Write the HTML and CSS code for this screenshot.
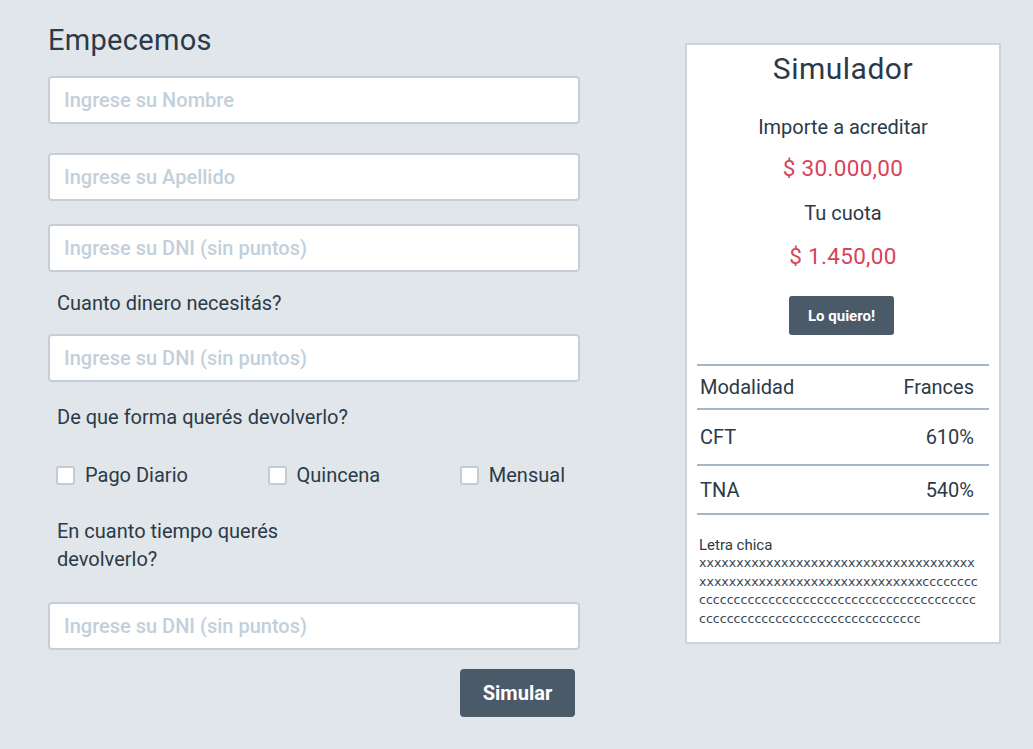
FILE: index.html
```html
<!DOCTYPE html>
<html lang="es">
<head>
<meta charset="utf-8">
<title>Empecemos</title>
<link rel="stylesheet" href="styles.css">
</head>
<body>
<div class="page">
  <form class="form">
    <h1 class="title">Empecemos</h1>
    <input class="field f1" type="text" placeholder="Ingrese su Nombre">
    <input class="field f2" type="text" placeholder="Ingrese su Apellido">
    <input class="field f3" type="text" placeholder="Ingrese su DNI (sin puntos)">
    <p class="label l1">Cuanto dinero necesitás?</p>
    <input class="field f4" type="text" placeholder="Ingrese su DNI (sin puntos)">
    <p class="label l2">De que forma querés devolverlo?</p>
    <div class="checks">
      <label class="check"><input type="checkbox"><span>Pago Diario</span></label>
      <label class="check"><input type="checkbox"><span>Quincena</span></label>
      <label class="check"><input type="checkbox"><span>Mensual</span></label>
    </div>
    <p class="label l3">En cuanto tiempo querés devolverlo?</p>
    <input class="field f5" type="text" placeholder="Ingrese su DNI (sin puntos)">
    <button class="btn-simular" type="button">Simular</button>
  </form>

  <aside class="card">
    <h2 class="card-title">Simulador</h2>
    <p class="card-label c1">Importe a acreditar</p>
    <p class="amount a1">$ 30.000,00</p>
    <p class="card-label c2">Tu cuota</p>
    <p class="amount a2">$ 1.450,00</p>
    <button class="btn-quiero" type="button">Lo quiero!</button>
    <div class="table">
      <div class="row r1"><span>Modalidad</span><span>Frances</span></div>
      <div class="row r2"><span>CFT</span><span>610%</span></div>
      <div class="row r3"><span>TNA</span><span>540%</span></div>
    </div>
    <div class="fine">
      <p class="fine-title">Letra chica</p>
      <p class="fine-text">xxxxxxxxxxxxxxxxxxxxxxxxxxxxxxxxxxxxx<br>xxxxxxxxxxxxxxxxxxxxxxxxxxxxxxcccccccc<br>cccccccccccccccccccccccccccccccccccccccc<br>cccccccccccccccccccccccccccccccc</p>
    </div>
  </aside>
</div>
</body>
</html>
```

FILE: styles.css
```css
* { box-sizing: border-box; }

html, body {
  margin: 0;
  padding: 0;
  background: #e1e6eb;
  font-family: Roboto, "Noto Sans", sans-serif;
  color: #2b3a48;
}

.page {
  display: flex;
  align-items: flex-start;
  gap: 105px;
  padding: 22px 0 0 48px;
}

.form {
  width: 532px;
  display: flex;
  flex-direction: column;
}

.title {
  margin: 0 0 18px 0;
  font-size: 29px;
  line-height: 36px;
  font-weight: 400;
  letter-spacing: 0.3px;
  color: #2b3a48;
}

.field {
  display: block;
  width: 100%;
  height: 48px;
  border: 2px solid #c6cfd8;
  border-radius: 4px;
  background: #ffffff;
  padding: 0 14px;
  font-family: inherit;
  font-size: 20px;
  font-weight: 500;
  color: #2b3a48;
  outline: none;
}
.field::placeholder {
  color: #c3cfda;
  opacity: 1;
}

.f1 { margin-bottom: 29px; }
.f2 { margin-bottom: 23px; }
.f3 { margin-bottom: 17px; }
.f4 { margin-bottom: 21px; }
.f5 { margin-bottom: 19px; }

.label {
  margin: 0;
  padding-left: 9px;
  font-size: 20px;
  line-height: 28px;
}
.l1 { margin-bottom: 17px; }
.l2 { margin-bottom: 30px; }
.l3 { margin-top: 28px; margin-bottom: 29px; max-width: 250px; }

.checks {
  display: flex;
  justify-content: space-between;
  align-items: center;
  height: 28px;
  padding: 0 15px 0 8px;
}
.check {
  display: flex;
  align-items: center;
  gap: 10px;
  font-size: 20px;
  cursor: pointer;
}
.check input {
  appearance: none;
  -webkit-appearance: none;
  margin: 0;
  width: 19px;
  height: 19px;
  border: 2px solid #c3ccd6;
  border-radius: 3px;
  background: #ffffff;
}

.btn-simular {
  align-self: flex-end;
  margin-right: 5px;
  width: 115px;
  height: 48px;
  border: none;
  border-radius: 4px;
  background: #4a5a69;
  color: #ffffff;
  font-family: inherit;
  font-size: 20px;
  font-weight: 700;
}

.card {
  margin-top: 21px;
  width: 316px;
  height: 601px;
  border: 2px solid #cbd4dd;
  background: #ffffff;
  display: flex;
  flex-direction: column;
  align-items: center;
  padding: 6px 10px 0 10px;
}

.card-title {
  margin: 0;
  font-size: 30px;
  line-height: 36px;
  font-weight: 400;
  letter-spacing: 0.5px;
}

.card-label {
  margin: 0;
  font-size: 20px;
  line-height: 28px;
}
.c1 { margin-top: 26px; }
.c2 { margin-top: 16px; }

.amount {
  margin: 0;
  font-size: 22.5px;
  line-height: 30px;
  color: #d6445a;
  letter-spacing: 0.3px;
}
.a1 { margin-top: 12px; }
.a2 { margin-top: 14px; }

.btn-quiero {
  margin-top: 25px;
  width: 105px;
  height: 39px;
  border: none;
  border-radius: 3px;
  background: #4a5a69;
  color: #ffffff;
  font-family: inherit;
  font-size: 15px;
  font-weight: 700;
  margin-right: 3px;
}

.table {
  align-self: stretch;
  margin-top: 29px;
  border-bottom: 2px solid #a8b5c2;
}
.row {
  display: flex;
  justify-content: space-between;
  align-items: center;
  border-top: 2px solid #a8b5c2;
  padding: 0 15px 0 3px;
  font-size: 20px;
}
.r1 { height: 44px; }
.r2 { height: 56px; }
.r3 { height: 49px; }

.fine {
  align-self: stretch;
  margin-top: 21px;
  padding-left: 2px;
}
.fine-title {
  margin: 0;
  font-size: 15px;
  line-height: 18px;
}
.fine-text {
  margin: 0;
  font-family: "DejaVu Sans", Roboto, sans-serif;
  font-size: 12.6px;
  line-height: 18.7px;
  color: #3a4855;
}
```
